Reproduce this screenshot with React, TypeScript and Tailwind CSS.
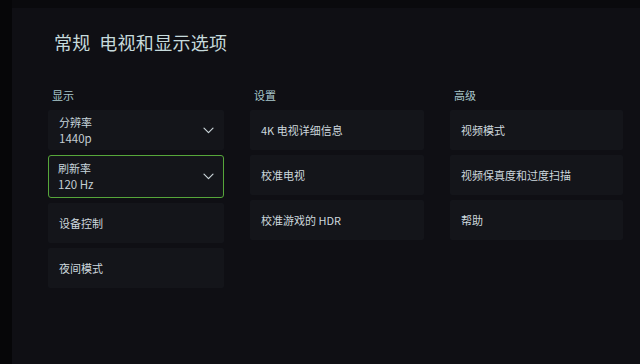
import React from "react";

type Item = { label: string; value?: string; dropdown?: boolean; focused?: boolean };

const columns: { title: string; items: Item[] }[] = [
  {
    title: "显示",
    items: [
      { label: "分辨率", value: "1440p", dropdown: true },
      { label: "刷新率", value: "120 Hz", dropdown: true, focused: true },
      { label: "设备控制" },
      { label: "夜间模式" },
    ],
  },
  {
    title: "设置",
    items: [{ label: "4K 电视详细信息" }, { label: "校准电视" }, { label: "校准游戏的 HDR" }],
  },
  {
    title: "高级",
    items: [{ label: "视频模式" }, { label: "视频保真度和过度扫描" }, { label: "帮助" }],
  },
];

function Chevron() {
  return (
    <svg width="11" height="7" viewBox="0 0 11 7" fill="none" className="shrink-0">
      <path d="M1 1.2 L5.5 5.7 L10 1.2" stroke="#c9d3d8" strokeWidth="1.2" strokeLinecap="round" strokeLinejoin="round" />
    </svg>
  );
}

function Card({ item }: { item: Item }) {
  return (
    <div
      className={
        item.focused
          ? "h-[43px] rounded-[3px] border-[1.5px] border-[#56a63a] bg-[#14151a] pl-[9px] pr-[9px] flex items-center justify-between"
          : "h-[40px] rounded-[2px] bg-[#14151a] pl-[11px] pr-[10px] flex items-center justify-between"
      }
    >
      {item.value ? (
        <div className="flex flex-col gap-[3px]">
          <span className="text-[11px] leading-[13px] text-[#c7d6dc]">{item.label}</span>
          <span className="text-[11.5px] leading-[13px] text-[#c3cdd2]">{item.value}</span>
        </div>
      ) : (
        <span className="text-[11px] leading-[13px] text-[#cdd8de]">{item.label}</span>
      )}
      {item.dropdown && <Chevron />}
    </div>
  );
}

export default function App() {
  return (
    <div
      className="w-[640px] h-[364px] bg-[#0f0f14] flex overflow-hidden"
      style={{ fontFamily: '"Noto Sans CJK SC", "Noto Sans", sans-serif' }}
    >
      <div className="w-[12px] bg-[#060608]" />
      <div className="flex-1 flex flex-col">
        <div className="h-[8px] bg-[#0a0a0d]" />
        <div className="pt-[22px] pl-[36px]">
          <h1 className="pl-[6px] text-[18px] leading-[24px] text-[#c6dadc] tracking-[0.3px]">
            常规&nbsp;&nbsp;电视和显示选项
          </h1>
          <div className="grid grid-cols-[176px_174px_173px] gap-x-[26px] mt-[34px]">
            {columns.map((col) => (
              <div key={col.title} className="flex flex-col">
                <div className="h-[14px] mb-[8px] pl-[4px] text-[11px] leading-[14px] text-[#a9c8cc]">
                  {col.title}
                </div>
                <div className="flex flex-col gap-[5px]">
                  {col.items.map((it) => (
                    <Card key={it.label} item={it} />
                  ))}
                </div>
              </div>
            ))}
          </div>
        </div>
      </div>
    </div>
  );
}
